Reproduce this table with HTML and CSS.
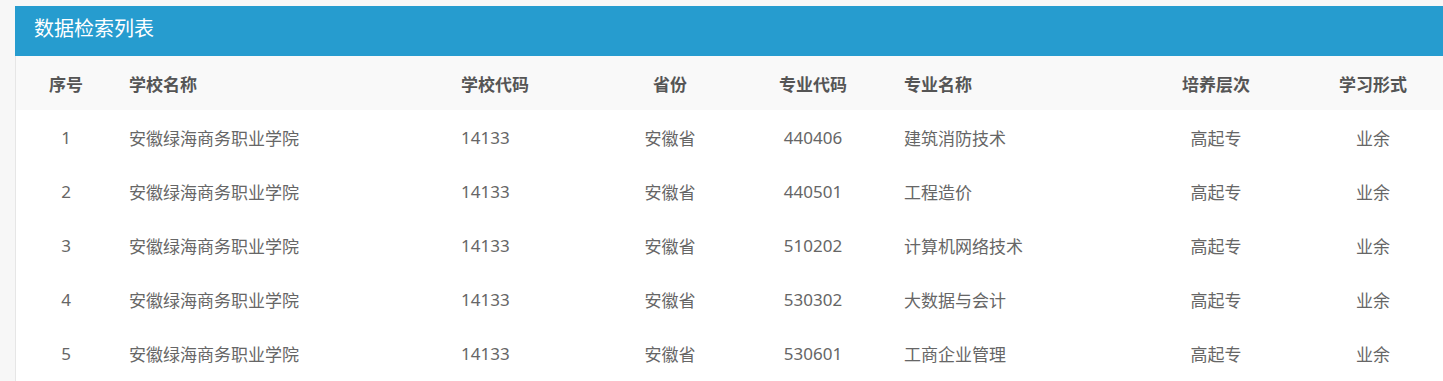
FILE: index.html
```html
<!DOCTYPE html>
<html lang="zh-CN">
<head>
<meta charset="utf-8">
<title>数据检索列表</title>
<link rel="stylesheet" href="styles.css">
</head>
<body>
<div class="panel">
  <div class="panel-title">数据检索列表</div>
  <table class="data-table">
    <colgroup>
      <col class="w-idx"><col class="w-school"><col class="w-code"><col class="w-prov"><col class="w-major-code"><col class="w-major"><col class="w-level"><col>
    </colgroup>
    <thead>
      <tr>
        <th class="c-center">序号</th>
        <th class="c-school">学校名称</th>
        <th class="c-code">学校代码</th>
        <th class="c-center">省份</th>
        <th class="c-center">专业代码</th>
        <th class="c-major">专业名称</th>
        <th class="c-center">培养层次</th>
        <th class="c-last">学习形式</th>
      </tr>
    </thead>
    <tbody>
      <tr><td class="c-center">1</td><td class="c-school">安徽绿海商务职业学院</td><td class="c-code">14133</td><td class="c-center">安徽省</td><td class="c-center">440406</td><td class="c-major">建筑消防技术</td><td class="c-center">高起专</td><td class="c-last">业余</td></tr>
      <tr><td class="c-center">2</td><td class="c-school">安徽绿海商务职业学院</td><td class="c-code">14133</td><td class="c-center">安徽省</td><td class="c-center">440501</td><td class="c-major">工程造价</td><td class="c-center">高起专</td><td class="c-last">业余</td></tr>
      <tr><td class="c-center">3</td><td class="c-school">安徽绿海商务职业学院</td><td class="c-code">14133</td><td class="c-center">安徽省</td><td class="c-center">510202</td><td class="c-major">计算机网络技术</td><td class="c-center">高起专</td><td class="c-last">业余</td></tr>
      <tr><td class="c-center">4</td><td class="c-school">安徽绿海商务职业学院</td><td class="c-code">14133</td><td class="c-center">安徽省</td><td class="c-center">530302</td><td class="c-major">大数据与会计</td><td class="c-center">高起专</td><td class="c-last">业余</td></tr>
      <tr><td class="c-center">5</td><td class="c-school">安徽绿海商务职业学院</td><td class="c-code">14133</td><td class="c-center">安徽省</td><td class="c-center">530601</td><td class="c-major">工商企业管理</td><td class="c-center">高起专</td><td class="c-last">业余</td></tr>
    </tbody>
  </table>
</div>
</body>
</html>
```
FILE: styles.css
```css
html, body {
  margin: 0;
  height: 381px;
  overflow: hidden;
}
body {
  background: #f7f7f7;
  padding: 6px 0 0 15px;
  font-family: "Noto Sans", "Noto Sans CJK SC", sans-serif;
  color: #666;
}
.panel {
  background: #fff;
  border-left: 1px solid #e6e6e6;
  padding-bottom: 20px;
}
.panel-title {
  height: 50px;
  margin-left: -1px;
  padding-left: 19px;
  background: #269ccf;
  color: #fff;
  font-size: 20px;
  line-height: 46px;
  box-sizing: border-box;
}
.data-table {
  width: 100%;
  table-layout: fixed;
  border-collapse: collapse;
  font-size: 17px;
}
.w-idx { width: 100px; }
.w-school { width: 333px; }
.w-code { width: 151px; }
.w-prov { width: 140px; }
.w-major-code { width: 146px; }
.w-major { width: 254px; }
.w-level { width: 152px; }
.data-table th,
.data-table td {
  height: 54px;
  padding: 0;
  vertical-align: middle;
  white-space: nowrap;
}
.data-table thead tr {
  background: #f9f9f9;
}
.data-table th {
  color: #555;
  font-weight: bold;
}
.c-center { text-align: center; }
.c-school { text-align: left; padding-left: 13px !important; }
.c-code { text-align: left; padding-left: 12px !important; }
.c-major { text-align: left; padding-left: 18px !important; }
.c-last { text-align: center; padding-left: 11px !important; }
```
